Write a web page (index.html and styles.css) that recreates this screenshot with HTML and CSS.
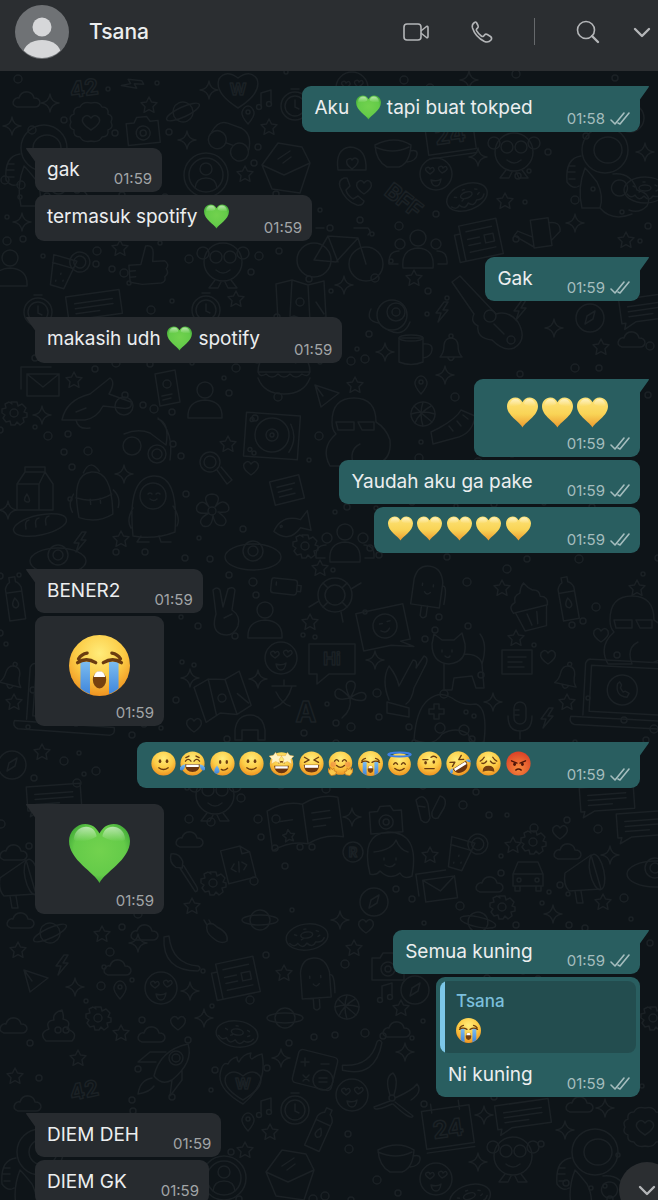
FILE: index.html
```html
<!DOCTYPE html>
<html lang="id">
<head>
    <meta charset="UTF-8">
    <meta name="viewport" content="width=device-width, initial-scale=1">
    <title>Tsana</title>
    <link rel="stylesheet" href="styles.css">
</head>
<body>
<svg class="sprite" aria-hidden="true">
    <defs>
        <radialGradient id="g-face" cx=".5" cy=".3" r=".72">
            <stop offset="0" stop-color="#ffec7a"></stop>
            <stop offset=".55" stop-color="#fccb45"></stop>
            <stop offset="1" stop-color="#ee8f1e"></stop>
        </radialGradient>
        <radialGradient id="g-angry" cx=".5" cy=".7" r=".75">
            <stop offset="0" stop-color="#f68a3c"></stop>
            <stop offset="1" stop-color="#d93a25"></stop>
        </radialGradient>
        <linearGradient id="g-yellow" x2="0" y2="1">
            <stop offset="0" stop-color="#fde37a"></stop>
            <stop offset=".55" stop-color="#f9d456"></stop>
            <stop offset="1" stop-color="#ec9a2f"></stop>
        </linearGradient>
        <radialGradient id="g-green" cx=".5" cy=".45" r=".6">
            <stop offset="0" stop-color="#72d24e"></stop>
            <stop offset=".7" stop-color="#64cb49"></stop>
            <stop offset="1" stop-color="#3ba334"></stop>
        </radialGradient>
        <linearGradient id="g-shine" x2="0" y2="1">
            <stop offset="0" stop-color="#fff" stop-opacity=".55"></stop>
            <stop offset="1" stop-color="#fff" stop-opacity="0"></stop>
        </linearGradient>
        <linearGradient id="g-tear" x2="0" y2="1">
            <stop offset="0" stop-color="#7cbcf0"></stop>
            <stop offset="1" stop-color="#3f86dc"></stop>
        </linearGradient>
    </defs>
    <symbol id="heart" viewBox="0 0 64 64">
        <path d="M32 63C27 52 0 39 0 19C0 9 8 1 17 1C24 1 29 5 32 11C35 5 40 1 47 1C56 1 64 9 64 19C64 39 37 52 32 63Z"></path>
        <path fill="url(#g-shine)" d="M5 17C6 8 12 4 18 4C24 4 28 8 29 14C25 18 7 22 5 17ZM59 17C58 8 52 4 46 4C40 4 36 8 35 14C39 18 57 22 59 17Z"></path>
    </symbol>
    <symbol id="smile" viewBox="0 0 64 64">
        <circle cx="32" cy="32" r="31" fill="url(#g-face)"></circle>
        <g fill="#6b3c10"><ellipse cx="23" cy="26" rx="3.4" ry="5"></ellipse><ellipse cx="41" cy="26" rx="3.4" ry="5"></ellipse></g>
        <path d="M20 43q12 9 24 0" class="ink"></path>
    </symbol>
    <symbol id="joy" viewBox="0 0 64 64">
        <circle cx="32" cy="32" r="31" fill="url(#g-face)"></circle>
        <path d="M14 26q7-9 14 0M36 26q7-9 14 0M15 17l8-4M49 17l-8-4" class="ink"></path>
        <path fill="#6b3510" d="M13 34h38q-1 20-19 20t-19-20z"></path>
        <path fill="#fff" d="M16 35h32v6h-32z"></path>
        <path fill="url(#g-tear)" d="M14 34q-2 16-10 16q-7-1-4-8q4-7 14-8zM50 34q2 16 10 16q7-1 4-8q-4-7-14-8z"></path>
    </symbol>
    <symbol id="tear" viewBox="0 0 64 64">
        <circle cx="32" cy="32" r="31" fill="url(#g-face)"></circle>
        <g fill="#6b3c10"><ellipse cx="26" cy="28" rx="3.2" ry="5"></ellipse><ellipse cx="43" cy="28" rx="3.2" ry="5"></ellipse></g>
        <path d="M29 47q8 5 16-3" class="ink"></path>
        <path fill="url(#g-tear)" d="M18 37q8 11 6 17q-5 7-12 2q-4-7 6-19z"></path>
    </symbol>
    <symbol id="stars" viewBox="0 0 64 64">
        <circle cx="32" cy="33" r="30" fill="url(#g-face)"></circle>
        <path d="M25 30q7-5 14 0" class="ink"></path>
        <path fill="#6b3510" d="M13 38h38q-2 19-19 19t-19-19z"></path>
        <path fill="#fff" d="M16 39h32v6h-32z"></path>
        <path fill="#fff3c4" stroke="#e2a33c" d="M17 3l5 9 11 0-7 9 3 11-12-5-11 6 2-12-8-8 11-2zM47 3l-5 9-11 0 7 9-3 11 12-5 11 6-2-12 8-8-11-2z"></path>
    </symbol>
    <symbol id="laugh" viewBox="0 0 64 64">
        <circle cx="32" cy="32" r="31" fill="url(#g-face)"></circle>
        <path d="M14 16l12 7-12 6M50 16l-12 7 12 6" class="ink"></path>
        <path fill="#6b3510" d="M12 35h40q-1 20-20 20t-20-20z"></path>
        <path fill="#fff" d="M15 36h34v7h-34z"></path>
    </symbol>
    <symbol id="hug" viewBox="0 0 64 64">
        <circle cx="32" cy="31" r="30" fill="url(#g-face)"></circle>
        <g fill="#ee7a45" opacity=".5"><circle cx="14" cy="34" r="7"></circle><circle cx="50" cy="34" r="7"></circle></g>
        <path d="M17 26q5-8 10 0M37 26q5-8 10 0M22 37q10 10 20 0" class="ink"></path>
        <path fill="#fbc74a" stroke="#c97a1e" stroke-width="2" d="M0 44l5 5 1-8 5 7 4-5 1 8 6 2-3 8-11 2q-8-6-8-19zM64 44l-5 5-1-8-5 7-4-5-1 8-6 2 3 8 11 2q8-6 8-19z"></path>
    </symbol>
    <symbol id="sob" viewBox="0 0 64 64">
        <circle cx="32" cy="32" r="32" fill="url(#g-face)"></circle>
        <path fill="url(#g-tear)" d="M12 28h10v34q-5-2-10-6zM42 28h10v28q-5 4-10 6z"></path>
        <path d="M9 29q9-6 19 0M36 29q10-6 19 0M10 25q3-5 9-6M54 25q-3-5-9-6" class="ink"></path>
        <ellipse cx="32" cy="47" rx="7" ry="9" fill="#77410f"></ellipse>
        <path fill="#fff" d="M26 44q1-6 6-6t6 6z"></path>
    </symbol>
    <symbol id="halo" viewBox="0 0 64 64">
        <circle cx="32" cy="34" r="29" fill="url(#g-face)"></circle>
        <path d="M17 34q5-8 10 0M37 34q5-8 10 0M20 45q12 10 24 0" class="ink"></path>
        <ellipse cx="32" cy="9" rx="29" ry="5" fill="none" stroke="#3f7fe4" stroke-width="5"></ellipse>
    </symbol>
    <symbol id="brow" viewBox="0 0 64 64">
        <circle cx="32" cy="32" r="31" fill="url(#g-face)"></circle>
        <g fill="#6b3c10"><ellipse cx="22" cy="30" rx="3.4" ry="4.4"></ellipse><ellipse cx="43" cy="28" rx="3.4" ry="4.4"></ellipse></g>
        <path d="M15 22h13M36 16q8-6 14 1M20 45h24" class="ink"></path>
    </symbol>
    <symbol id="rofl" viewBox="0 0 64 64">
        <g transform="rotate(-32 32 32)">
            <circle cx="32" cy="32" r="31" fill="url(#g-face)"></circle>
            <path d="M15 18l11 6-11 6M49 18l-11 6 11 6" class="ink"></path>
            <path fill="#6b3510" d="M12 36h40q-1 20-20 20t-20-20z"></path>
            <path fill="#fff" d="M15 37h34v7h-34z"></path>
            <path fill="url(#g-tear)" d="M12 34q-3 12-9 11q-5-9 9-11zM52 34q3 12 9 11q5-9-9-11z"></path>
        </g>
    </symbol>
    <symbol id="weary" viewBox="0 0 64 64">
        <circle cx="32" cy="32" r="31" fill="url(#g-face)"></circle>
        <path d="M11 26q5-2 10-10M53 26q-5-2-10-10M15 31q7 3 12-5M49 31q-7 3-12-5" class="ink"></path>
        <path fill="#77410f" d="M17 53q0-15 15-15t15 15q-15-5-30 0z"></path>
    </symbol>
    <symbol id="angry" viewBox="0 0 64 64">
        <circle cx="32" cy="32" r="31" fill="url(#g-angry)"></circle>
        <g fill="#4e1408"><ellipse cx="22" cy="34" rx="3.6" ry="4.4"></ellipse><ellipse cx="42" cy="34" rx="3.6" ry="4.4"></ellipse></g>
        <path d="M14 25l14 6M50 25l-14 6M25 49q7-6 14 0" class="ink dark"></path>
    </symbol>
    <symbol id="ticks" viewBox="0 0 20 14">
        <path d="M1 8l4 4L14 1M8 11l2 1L19 1"></path>
    </symbol>
</svg>

<header class="topbar">
    <svg class="avatar" viewBox="0 0 54 54" role="img" aria-label="Foto profil">
        <clipPath id="round"><circle cx="27" cy="27" r="26"></circle></clipPath>
        <circle cx="27" cy="27" r="27" fill="#6f7275"></circle>
        <g fill="#d6d7d9" clip-path="url(#round)">
            <circle cx="27" cy="22" r="9.5"></circle>
            <ellipse cx="27" cy="49" rx="19" ry="14"></ellipse>
        </g>
    </svg>
    <h1 class="name">Tsana</h1>
    <div class="calls">
        <button class="action" aria-label="Panggilan video">
            <svg class="icon" viewBox="0 0 32 32">
                <rect x="4" y="8" width="17" height="16" rx="3"></rect>
                <path d="M21.500 14.500l5-4q1.500-.8 1.500 1v9q0 1.800-1.500 1l-5-4"></path>
            </svg>
        </button>
        <button class="action" aria-label="Panggilan suara">
            <svg class="icon" viewBox="0 0 32 32">
                <path d="M8.500 6.500q-3 2-2 5.500q3 9 12 13.500q4 1.500 6.500-1.500q1.500-2-.5-3.500l-3.200-2q-1.600-1-2.800.5l-1 1.300q-1 .6-2.200-.3q-3-2.200-4.800-5.300q-.5-1 .2-1.800l1-1q1-1 .3-2.400l-1.600-3q-.8-1-1.900 0z"></path>
            </svg>
        </button>
    </div>
    <span class="divider"></span>
    <div class="tools">
        <button class="action" aria-label="Cari">
            <svg class="icon" viewBox="0 0 32 32">
                <circle cx="14" cy="14" r="8.500"></circle>
                <path d="M20 20l6 6" class="thick"></path>
            </svg>
        </button>
        <button class="action" aria-label="Menu">
            <svg class="icon" viewBox="0 0 32 32"><path d="M9 13l7 7 7-7" class="thick"></path></svg>
        </button>
    </div>
</header>

<main class="chat">
    <svg class="wallpaper" id="wallpaper" aria-hidden="true"></svg>

    <section class="group out">
        <div class="bubble">
            <p class="text">Aku <svg class="emoji green" role="img" aria-label="💚"><use href="#heart"></use></svg> tapi buat tokped</p>
            <div class="meta"><time>01:58</time><svg class="ticks"><use href="#ticks"></use></svg></div>
        </div>
    </section>

    <section class="group in">
        <div class="bubble">
            <p class="text">gak</p>
            <div class="meta"><time>01:59</time></div>
        </div>
        <div class="bubble">
            <p class="text">termasuk spotify <svg class="emoji green" role="img" aria-label="💚"><use href="#heart"></use></svg></p>
            <div class="meta"><time>01:59</time></div>
        </div>
    </section>

    <section class="group out">
        <div class="bubble">
            <p class="text">Gak</p>
            <div class="meta"><time>01:59</time><svg class="ticks"><use href="#ticks"></use></svg></div>
        </div>
    </section>

    <section class="group in">
        <div class="bubble">
            <p class="text">makasih udh <svg class="emoji green" role="img" aria-label="💚"><use href="#heart"></use></svg> spotify</p>
            <div class="meta"><time>01:59</time></div>
        </div>
    </section>

    <section class="group out">
        <div class="bubble sticker">
            <div class="big three">
                <svg class="yellow" role="img" aria-label="💛"><use href="#heart"></use></svg>
                <svg class="yellow" role="img" aria-label="💛"><use href="#heart"></use></svg>
                <svg class="yellow" role="img" aria-label="💛"><use href="#heart"></use></svg>
            </div>
            <div class="meta"><time>01:59</time><svg class="ticks"><use href="#ticks"></use></svg></div>
        </div>
        <div class="bubble">
            <p class="text">Yaudah aku ga pake</p>
            <div class="meta"><time>01:59</time><svg class="ticks"><use href="#ticks"></use></svg></div>
        </div>
        <div class="bubble">
            <div class="run five">
                <svg class="emoji yellow" role="img" aria-label="💛"><use href="#heart"></use></svg>
                <svg class="emoji yellow" role="img" aria-label="💛"><use href="#heart"></use></svg>
                <svg class="emoji yellow" role="img" aria-label="💛"><use href="#heart"></use></svg>
                <svg class="emoji yellow" role="img" aria-label="💛"><use href="#heart"></use></svg>
                <svg class="emoji yellow" role="img" aria-label="💛"><use href="#heart"></use></svg>
            </div>
            <div class="meta"><time>01:59</time><svg class="ticks"><use href="#ticks"></use></svg></div>
        </div>
    </section>

    <section class="group in">
        <div class="bubble">
            <p class="text">BENER2</p>
            <div class="meta"><time>01:59</time></div>
        </div>
        <div class="bubble sticker">
            <div class="big"><svg role="img" aria-label="😭"><use href="#sob"></use></svg></div>
            <div class="meta"><time>01:59</time></div>
        </div>
    </section>

    <section class="group out">
        <div class="bubble">
            <div class="run all">
                <svg class="emoji" role="img" aria-label="🙂"><use href="#smile"></use></svg>
                <svg class="emoji" role="img" aria-label="😂"><use href="#joy"></use></svg>
                <svg class="emoji" role="img" aria-label="🥲"><use href="#tear"></use></svg>
                <svg class="emoji" role="img" aria-label="🙂"><use href="#smile"></use></svg>
                <svg class="emoji" role="img" aria-label="🤩"><use href="#stars"></use></svg>
                <svg class="emoji" role="img" aria-label="😆"><use href="#laugh"></use></svg>
                <svg class="emoji" role="img" aria-label="🤗"><use href="#hug"></use></svg>
                <svg class="emoji" role="img" aria-label="😭"><use href="#sob"></use></svg>
                <svg class="emoji" role="img" aria-label="😇"><use href="#halo"></use></svg>
                <svg class="emoji" role="img" aria-label="🤨"><use href="#brow"></use></svg>
                <svg class="emoji" role="img" aria-label="🤣"><use href="#rofl"></use></svg>
                <svg class="emoji" role="img" aria-label="😩"><use href="#weary"></use></svg>
                <svg class="emoji" role="img" aria-label="😡"><use href="#angry"></use></svg>
            </div>
            <div class="meta"><time>01:59</time><svg class="ticks"><use href="#ticks"></use></svg></div>
        </div>
    </section>

    <section class="group in">
        <div class="bubble sticker">
            <div class="big"><svg class="green" role="img" aria-label="💚"><use href="#heart"></use></svg></div>
            <div class="meta"><time>01:59</time></div>
        </div>
    </section>

    <section class="group out">
        <div class="bubble">
            <p class="text">Semua kuning</p>
            <div class="meta"><time>01:59</time><svg class="ticks"><use href="#ticks"></use></svg></div>
        </div>
        <div class="bubble reply">
            <blockquote class="quote">
                <p class="author">Tsana</p>
                <svg class="emoji" role="img" aria-label="😭"><use href="#sob"></use></svg>
            </blockquote>
            <p class="text">Ni kuning</p>
            <div class="meta"><time>01:59</time><svg class="ticks"><use href="#ticks"></use></svg></div>
        </div>
    </section>

    <section class="group in">
        <div class="bubble">
            <p class="text">DIEM DEH</p>
            <div class="meta"><time>01:59</time></div>
        </div>
        <div class="bubble">
            <p class="text">DIEM GK</p>
            <div class="meta"><time>01:59</time></div>
        </div>
    </section>

    <button class="jump" aria-label="Ke pesan terbaru">
        <svg class="icon" viewBox="0 0 32 32"><path d="M9 13l7 7 7-7" class="thick"></path></svg>
    </button>
</main>
<script src="wallpaper.js"></script>
</body>
</html>
```
FILE: styles.css
```css
*{
    box-sizing: border-box;
}
body{
    margin: 0;
    height: 100vh;
    overflow: hidden;
    display: flex;
    flex-direction: column;
    background-color: #0e1418;
    color: #eceeef;
    font-family: Inter, Roboto, "Liberation Sans", sans-serif;
}
p, h1, blockquote{
    margin: 0;
}
button{
    all: unset;
    cursor: pointer;
}
.sprite{
    position: absolute;
    width: 0;
    height: 0;
}
.ink{
    fill: none;
    stroke: #6b3c10;
    stroke-width: 3.5;
    stroke-linecap: round;
    stroke-linejoin: round;
}
.dark{
    stroke: #4e1408;
}

/* header */
.topbar{
    flex: none;
    display: flex;
    align-items: center;
    height: 71px;
    padding: 0 0 8px 15px;
    background-color: #2b2e31;
}
.avatar{
    width: 54px;
    height: 54px;
}
.name{
    flex: 1;
    margin-left: 20px;
    font-size: 21px;
    font-weight: 500;
    line-height: 28px;
}
.calls{
    display: flex;
    gap: 34px;
}
.tools{
    display: flex;
    gap: 22px;
}
.divider{
    width: 1px;
    height: 27px;
    margin: 0 37px 0 36px;
    background-color: #66696c;
}
.action{
    width: 32px;
    height: 32px;
}
.icon{
    display: block;
    width: 32px;
    height: 32px;
    fill: none;
    stroke: #b4b6b8;
    stroke-width: 1.6;
    stroke-linecap: round;
    stroke-linejoin: round;
}
.thick{
    stroke-width: 2.4;
}

/* conversation */
.chat{
    position: relative;
    flex: 1;
    min-height: 0;
    overflow: hidden;
    display: flex;
    flex-direction: column;
    gap: 16px;
    padding: 15px 18px 0 35px;
}
.wallpaper{
    position: absolute;
    top: 0;
    left: 0;
    width: 100%;
    height: 100%;
    fill: none;
    stroke: #1b2125;
    stroke-width: 1.5;
    stroke-linecap: round;
    stroke-linejoin: round;
    font-family: Inter, sans-serif;
    font-weight: 700;
}
.group{
    flex: none;
    position: relative;
    display: flex;
    flex-direction: column;
    gap: 3px;
    align-items: flex-start;
}
.out{
    align-items: flex-end;
}
.bubble{
    position: relative;
    display: flex;
    align-items: flex-end;
    gap: 34px;
    padding: 9px 10px 4px 12px;
    border-radius: 9px;
    background-color: #272b2f;
}
.out .bubble{
    background-color: #295e60;
}
/* the first bubble of a group carries the tail */
.in .bubble:first-child{
    border-top-left-radius: 0;
}
.out .bubble:first-child{
    border-top-right-radius: 0;
}
.bubble:first-child::before{
    content: "";
    position: absolute;
    top: 0;
    left: -9px;
    width: 10px;
    height: 15px;
    background-color: inherit;
    clip-path: polygon(0 0, 100% 0, 100% 100%, 80% 80%, 5% 10%);
}
.out .bubble:first-child::before{
    left: auto;
    right: -9px;
    clip-path: polygon(0 0, 100% 0, 95% 10%, 20% 80%, 0 100%);
}
.text{
    margin-bottom: 5px;
    font-size: 19px;
    line-height: 26px;
}
.text:has(.emoji){
    margin-bottom: 7px;
}
.emoji{
    width: 25px;
    height: 25px;
}
.text .emoji{
    display: inline-block;
    margin: 0 1px;
    vertical-align: -6px;
}
.green{
    fill: url(#g-green);
}
.yellow{
    fill: url(#g-yellow);
}
.meta{
    flex: none;
    display: flex;
    align-items: center;
    gap: 5px;
    font-size: 15px;
    line-height: 18px;
    color: #a2a5a7;
}
.out .meta{
    color: #a5bdbe;
}
.ticks{
    width: 20px;
    height: 14px;
    fill: none;
    stroke: #a5bdbe;
    stroke-width: 1.6;
    stroke-linecap: round;
    stroke-linejoin: round;
}
.run{
    display: flex;
    justify-content: space-between;
    margin: 0 2px 8px;
}
.five{
    width: 143px;
}
.all{
    width: 380px;
}
.sticker{
    flex-direction: column;
    gap: 8px;
    padding-top: 19px;
}
.big{
    display: flex;
    gap: 4px;
    padding: 0 24px 0 22px;
}
.big svg{
    width: 61px;
    height: 61px;
}
.big.three{
    margin: -1px 0;
    padding: 0 22px 0 21px;
}
.three svg{
    width: 31px;
    height: 31px;
}
.reply{
    display: grid;
    grid-template-columns: max-content max-content;
    column-gap: 34px;
    row-gap: 9px;
    padding-top: 4px;
}
.quote{
    grid-column: 1 / 3;
    height: 72px;
    margin: 0 -6px 0 -8px;
    padding: 10px 16px;
    border-radius: 8px;
    background-image: linear-gradient(to right, #7cc7e8 5px, #234d4f 5px);
}
.author{
    font-size: 17px;
    font-weight: 500;
    line-height: 20px;
    color: #7bbfdc;
}
.quote .emoji{
    display: block;
    margin-top: 7px;
}
.jump{
    position: absolute;
    right: -17px;
    bottom: -18px;
    width: 56px;
    height: 56px;
    display: flex;
    align-items: center;
    justify-content: center;
    border-radius: 50%;
    background-color: #2b2e31;
}
```
FILE: wallpaper.js
```js
const wallpaper = document.querySelector('#wallpaper')
const TOP = 71

// every doodle is drawn around its own 0,0
const doodles = {
    star: '<path d="M0-8l2.500 5 5.500.8-4 4 1 5.600-5-2.700-5 2.700 1-5.600-4-4 5.500-.8z"/>',
    sparkle: '<path d="M0-9q1 8 9 9q-8 1-9 9q-1-8-9-9q8-1 9-9z"/>',
    heart: '<path d="M0 7q-9-6-7-11q4-5 7 0q4-5 7 0q2 5-7 11z"/>',
    cloud: '<path d="M-10 7q-6-2-3-7q2-3 5-2q2-7 9-6q5 1 6 6q6 0 6 5q-1 4-5 4z"/>',
    pin: '<path d="M0 9q-7-8-6-12q2-6 6-6t6 6q1 4-6 12z"/><circle cy="-3" r="2"/>',
    note: '<path d="M-4 6v-13l10-3v13"/><circle cx="-6" cy="7" r="2.500"/><circle cx="4" cy="4" r="2.500"/>',
    bolt: '<path d="M2-10l-8 11h5l-3 9 10-12h-5l5-8z"/>',
    planet: '<circle r="10"/><ellipse rx="18" ry="5"/>',
    donut: '<ellipse rx="21" ry="13"/><ellipse cy="-2" rx="6" ry="3"/><path d="M-18 4q4 5 8 1q4 7 9 1q5 6 9 0q6 2 9-3M-12-4l2 1M-6 2l2-1M10-5l2 1M11 1l2-1M-2-8l2 0"/>',
    smiley: '<circle r="16"/><path d="M-6 0q-6-4-4-6q3-2 4 1q3-3 4 0q1 2-4 5zM6-1q-5-4-3-6q3-2 4 1q3-3 4 0q1 2-5 5zM-5 6q6 2 10-1q-1 7-5 7t-5-6z"/>',
    camera: '<path d="M-16-9h8l3-5h10l3 5h8v22h-32z"/><circle cy="2" r="7"/><circle cy="2" r="3"/>',
    badge: '<path d="M-20 0q-3-6 3-8q-1-7 6-7q3-6 11-4q8-2 11 4q7 0 6 7q6 2 3 8q3 6-3 8q1 7-6 7q-3 6-11 4q-8 2-11-4q-7 0-6-7q-6-2-3-8z"/><path d="M0 8q-11-7-8-12q4-5 8 0q4-5 8 0q3 5-8 12z"/>',
    wheart: '<path d="M0 18q-24-15-19-29q7-10 19-1q12-9 19 1q5 14-19 29z"/><text y="5" font-size="16" text-anchor="middle">W</text>',
    flame: '<path d="M0 24q-28-16-22-34q2-8 7-6q2-5 9-7q0 4 2 5q4-8 12-9q-2 5 1 6q5-4 10-5q6 30-19 50z"/><path d="M0 20q-22-13-17-24q7-8 17 0q10-8 17 0q5 11-17 24z"/><text y="9" font-size="15" text-anchor="middle">W</text>',
    n42: '<text y="8" font-size="22" text-anchor="middle">42</text>',
    bff: '<text y="8" font-size="22" text-anchor="middle">BFF</text>',
    calendar: '<path d="M-24-20h48v38h-48zM-24 22h48M-14-26v9M14-26v9"/><text y="9" font-size="24" text-anchor="middle">24</text>',
    person: '<circle cy="-12" r="8"/><path d="M-17 16q-1-17 17-18q18 1 17 18z"/>',
    avatar: '<circle r="22"/><circle r="17"/><circle cy="-6" r="6"/><path d="M-11 13q1-10 11-10t11 10"/>',
    people: '<circle cy="-14" r="8"/><circle cx="-18" cy="-8" r="5"/><circle cx="18" cy="-8" r="5"/><path d="M-15 16q-2-19 15-20q17 1 15 20zM-20 12h-9q-1-13 10-13M20 12h9q1-13-10-13"/>',
    glasses: '<circle cx="-12" cy="4" r="9"/><circle cx="13" cy="8" r="9"/><path d="M-3 4h7M-20-1q2-14 12-14h15q12 2 14 18"/>',
    envelope: '<path d="M-16-10h32v22h-32zM-16-10l16 13 16-13M-22 5v-22h30"/>',
    letter: '<path d="M-24 0l16-22 24 4 8 16-10 30-28-4zM-24 0l22 10 26-12M-8-6l12-8M-3-2l8-6"/>',
    astronaut: '<circle cy="-12" r="23"/><ellipse cx="3" cy="-12" rx="14" ry="13"/><path d="M-24-6q-16 2-14 26q6 8 12 4M-36 4h6M-37 10h7M-36 17h6M-20 6q-8 20-3 40h18q4-12-3-26q-8-10-12-14M8 12q18-2 24 16q16 4 10 16q-8 8-18 4M14 18a8 8 0 1 0 1 0M-5 46q12 14 32 6"/>',
    clock: '<circle r="14"/><circle r="10"/><path d="M0-6v7l4 2M-4-17h8"/>',
    compass: '<circle r="14"/><path d="M-5 6l2-8 8-5-2 8z"/>',
    cup: '<path d="M-18-10q20-10 36 0q-1 18-12 22h-12q-11-6-12-22zM-18-8q18 8 34 0M17-4q8-2 7 4t-10 7"/>',
    dome: '<path d="M-14 10q-3-21 12-23q17 1 16 23zM0 9q-7-5-5-9q4-3 5 0q3-4 6 0q1 4-6 9z"/>',
    monkey: '<circle r="19"/><circle cx="-20" cy="-9" r="6"/><circle cx="20" cy="-9" r="6"/><circle cx="-7" cy="-5" r="6"/><circle cx="7" cy="-5" r="6"/><path d="M-7 8q7 6 14 0M-8 18l-6 8h9l3-6M8 18l6 8h-9l-3-6"/>',
    phone: '<path d="M-8-14q-6 2-4 9q5 14 17 18q6 1 7-4l-6-5-5 3q-6-4-7-9l4-4-3-8z"/>',
    paper: '<path d="M-18-18h38v36h-38zM-18-10h-6v28h6M-12-11h26M-12-3h12M-12 3h12M-12 10h26M5-4h9v8h-9z"/>',
    can: '<path d="M-8-13h18v28h-18zM-8 4l-14-8-4 4 18 14M10-8q12 0 10 10l-10 8"/>',
    bike: '<circle cx="-26" cy="6" r="17"/><circle cx="26" cy="10" r="17"/><path d="M-26 6l14-24 30 2-22 24zM-16-26h-8M18-16l8 26M14-26h14q4 4 0 7M-12-18l10 26"/>',
    drink: '<path d="M-14-12h24l-5 30h-14zM-13-4h22M-2 4v1M2 10v1M-5 12v1"/><circle cx="13" cy="-12" r="10"/><circle cx="13" cy="-12" r="6"/>',
    thumb: '<path d="M-18-2h12l6-18q8-1 7 8l-1 8h12q5 4 1 8q3 5-2 8q1 5-4 6h-19l-12-3zM-12 4h-6M-12 10h-6"/>',
    map: '<path d="M-24-18l16-4 16 5 16-4 2 36-16 5-16-6-16 5zM-8-22l-2 36M8-17l2 37M16 0l8 12"/><circle r="4"/>',
    speech: '<path d="M-28-12h54v24h-40l-12 6 2-6h-4zM-20-4h38M-20 1h38M-20 6h24"/>',
    comment: '<path d="M-15-12h30v24h-30zM-9-5h18M-9 0h14M-9 5h16"/>',
    gear: '<path d="M-3-11h6l1 4 4-2 4 4-2 4 3 1v4l-4 1 1 4-4 3-3-3-2 3h-4l-1-4-4 1-3-4 2-3-3-2v-4l4-1-1-4 4-2 3 2z"/><circle r="4"/>',
    rocket: '<path d="M-14 12q6-26 34-32q6 18-16 36q-10 6-18-4zM-12-2h-18l12-10h16M4 16l-2 16 12-16v-10M-16 14q-12 2-14 16q12-2 16-8"/><circle cx="8" cy="-6" r="7"/><circle cx="8" cy="-6" r="4"/>',
    plane: '<path d="M-34 16q4-20 28-26l20-16q6 4-1 16l22 8q2 8-10 6l-18-2q-6 12-18 14zM-20 8l10-4"/><circle cx="28" cy="2" r="9"/><path d="M-20 16q2 10 14 8"/>',
    passport: '<path d="M-12-14l20-4 5 32-20 4zM-5 8l10-2M-4 12l8-2"/><circle cy="-4" r="4"/>',
    burger: '<path d="M-26 0q0-20 26-20t26 20zM-26 0q2 6 8 2q6 6 12 0q6 6 12 0q6 6 12 0q6 4 8-2M-26 6q6 16 26 16t26-16M-8-12l2 1M2-14l2 1M10-10l2 1"/>',
    dart: '<path d="M-12-10l24 8-18 14zM-12-10l8 11"/>',
    turntable: '<path d="M-27-21h54v44h-54zM18-12q8 14 0 28"/><circle r="17"/><circle r="6"/><circle r="2"/><circle cx="-21" cy="-14" r="2"/><circle cx="-21" cy="16" r="2"/>',
    scooter: '<circle cx="-16" cy="6" r="9"/><circle cx="9" cy="14" r="9"/><circle cx="9" cy="14" r="5"/><path d="M-24-6q14-6 26-1l16 12q4-22-8-26M22 20q4-28-12-42"/>',
    lens: '<circle r="10"/><circle r="6"/><path d="M7 8l10 14 5-4-11-13"/>',
    bag: '<path d="M-17 28q-4-44 17-44t17 44q-17 8-34 0zM-18 8q18 8 36 0M-8-16q8-14 16 0M-20 4q-7 8-3 18M20 4q7 8 3 18M-4 11v5M6 11v5"/>',
    milk: '<path d="M-18-6l8-12h20l8 12v26h-36zM-10-18v-5h20v5M-18-6h22l6-12M4-6v26"/><path d="M-8 4q-5 7 0 8t0-8z"/>',
    penguin: '<path d="M-20 30q-6-58 20-60t22 56q-20 8-42 4zM-20 2q-7 12-2 20M20 0q8 12 4 20M-12 30l-4 6h12M6 30l2 6h10"/><circle cy="-10" r="13"/><path d="M-5-12q2-2 4 0M3-12q2-2 4 0M-3-7q4 3 7 0"/>',
    flower: '<circle r="4"/><path d="M-3-4q-8-12 3-13q11 1 3 13q8-9 13-2q4 9-10 7q12 8 6 13q-9 3-11-10q-1 14-10 11q-7-6 6-13q-15 2-12-7q5-8 12 1z"/>',
    fish: '<path d="M-18 5q10-16 28-8l8-8 1 20-10-4q-14 14-27 0z"/><circle cx="-10" cy="1" r="1"/>',
    bread: '<ellipse rx="27" ry="10" transform="rotate(-12)"/><path d="M-14 4q-2-8 3-9M-4 2q-2-8 3-9M6 0q-2-8 3-9"/>',
    hat: '<ellipse cy="6" rx="28" ry="13"/><circle r="10"/><circle r="5"/>',
    guitar: '<path d="M-34-30l8-6 36 38q12-4 22 8q10 18-4 26q-10 4-22-8q-16-2-14-14q-8-4-4-12zM8 12l10 10"/><circle cx="4" cy="4" r="6"/>',
    ball: '<circle r="12"/><path d="M-12 0q12-4 24 0M0-12q-4 12 0 24M-9-8q8 8 18 16M-8 9q4-10 16-17"/>',
    bell: '<path d="M-11 8q4-4 4-12q1-7 7-7t7 7q0 8 4 12zM-3 9q3 5 6 0"/><circle cy="-13" r="2"/>',
    mug: '<path d="M-13-12h24v24q-12 5-24 0zM11-6q10-1 9 6t-9 8"/><ellipse cx="-1" cy="-12" rx="12" ry="3"/>',
    rose: '<circle r="15"/><circle cx="4" cy="-3" r="9"/><circle cx="4" cy="-3" r="4"/><path d="M-13 8q-14-2-8-14M-4 15q16 8 22-8"/>',
    shoe: '<path d="M-24 4l8-4q18-10 22-18l14 6q-2 18-20 22l-22 6zM-6-2l4 5M2-7l4 5M8-13l5 4"/>',
    dino: '<path d="M-30-10q0-24 22-24t22 24q10 6 14 18q2 20-14 24M-30-10q0 8 4 12q-16 14-6 32h24q-6-16 6-22M-26-10h18v8h-16zM-4-10h16v8h-12z"/>',
    battery: '<rect x="-14" y="-8" width="26" height="15" rx="3"/><path d="M12-3h4v6h-4M-9-4v3"/>',
    ring: '<circle r="17"/><circle r="10"/><path d="M-12-12l5 5M12-12l-5 5M-12 12l5-5M12 12l-5-5M16-6l10-6M-16 6l-10 6M6 17l2 10"/>',
    peace: '<path d="M-12 4l-3-24q4-4 7 0l3 17 5-18q5-3 7 1l-3 20q9 6 6 16q-5 12-17 8q-10-4-5-20zM-4 8l8-4"/>',
    hi: '<path d="M-23-18h46v30h-26l-12 10v-10h-8z"/><text y="3" font-size="17" text-anchor="middle">Hi</text>',
    winkbox: '<path d="M-26-18h48v36h-10l12 8-22-6h-28z"/><circle r="12"/><path d="M-5-3h3M3-4h3M-5 4q5 4 9-1"/>',
    pop: '<path d="M-14 18v-26q2-14 14-14t15 15v25zM-3 18v10q3 4 6 0v-10M15-4q5-2 4 18M-5-4v2M6-4v2M-2 4q3 4 6 0"/>',
    cupcake: '<path d="M-16 4l5 20h22l5-20zM-18 4q-4-8 4-10q0-7 7-8q2-6 6-9q3 6 7 9q7 1 6 8q8 2 5 10zM-5 8l2 12M5 8l-2 12"/>',
    bottle: '<path d="M-8 20v-32q2-5 5-6v-5h6v5q3 1 5 6v32zM-8-8h16M0-2q-6 8 0 10q6-2 0-10z"/>',
    cat: '<path d="M-20-14l2-10 8 6h12l8-7 3 11q2 18-16 20q-17-1-17-20zM12-4q16 0 18 10q6-20-2-30M30 6l2 24h-8l-4-12-18 2-2 12h-8v-26M-10-8v2M0-8v2M-7-2q3 3 5 0"/>',
    hand: '<path d="M-16 14q-8-20 0-34q8 10 10 20l14-26q5 0 3 8l8-12q6 2 0 12l-10 20q-2 12-8 16M-18 16l22 6v9l-22-4z"/>',
    clover: '<path d="M0 2q-16 4-15-6q3-8 15 6q-8-16 1-17q9 1-1 17q14-10 16-2q0 8-16 2zM0 2q2 12-8 20"/>',
    translate: '<path d="M-24-20h24M-12-26v6M-4-20q-4 16-18 22M-20-14q6 12 14 14"/><text x="10" y="16" font-size="28" text-anchor="middle">A</text>',
    pad: '<path d="M-34 22q2-30 14-40q12-10 24-2q10 8 24 6q12 4 8 38q-12 4-16-8q-12-8-26 0q-8 14-28 6z"/><path d="M-14-14h5v5h5v5h-5v5h-5v-5h-5v-5h5z"/><circle cx="-8" cy="10" r="5"/><circle cx="16" cy="12" r="5"/><circle cx="18" cy="-6" r="2"/><circle cx="26" cy="-2" r="2"/>',
    phones: '<path d="M-15 12v-10q2-15 15-15t15 15v10h-7v-10h-16v10z"/>',
    mic: '<rect x="-6" y="-16" width="12" height="22" rx="6"/><path d="M-12-2q0 15 12 15t12-15M0 13v8M-6-8h5M-6-3h5"/>',
    laptop: '<path d="M-38 22v-52q2-5 6-4h70q5 0 5 5v51M-32 18v-46h70v46zM-50 24h100q2 7-4 8h-92q-6-2-4-8zM-10 24h22"/><circle r="15" cy="-5"/><path d="M-5-11q-2 12 10 13l2-4-4-2-2 1-3-4 1-3-2-3z"/>',
    book: '<path d="M-36-16q18-8 36-2q18-8 36-2v40q-18-6-36 2q-18-6-36 2zM0-18v40M-26-4h14M8-8h18M8-1h18M8 6h12"/><path d="M-18 5l2 4 4 1-3 3 1 4-4-2-4 2 1-4-3-3 4-1z"/>',
    flip: '<path d="M-12-12q8-8 12 4l2 14q-3 8-9 2zM-10-6l7 1M12-16q8 2 4 12l-6 10q-7 2-6-6z"/>',
    doc: '<path d="M-14-16h20l8 8v26h-28zM6-16v8h8M-4 0l-4 4 4 4M4 0l4 4-4 4M1-1l-2 10"/>',
    girl: '<path d="M-20 18q-10-40 18-42q32 0 24 44q-8 4-12-3q-10 8-20-2q-4 5-10 3zM-16-4q18-2 22-12q4 10 12 12M-6 2v2M6 2v2M-5 9q6 4 10-1"/>',
    rmark: '<circle r="10"/><text y="5" font-size="13" text-anchor="middle">R</text>',
    car: '<path d="M-15 12v-12l5-12h20l5 12v12zM-15 0h30M-13 12v5h5v-5M8 12v5h5v-5"/><circle cx="-9" cy="6" r="2"/><circle cx="9" cy="6" r="2"/>',
    horn: '<path d="M-20-2l26-18 10 34-32 2q-6-6-4-18zM-10 16l2 12h6l-2-12"/><ellipse cx="12" cy="-3" rx="7" ry="18" transform="rotate(-12 12 -3)"/>',
    brush: '<path d="M-8-20q8 0 10 10l-2 6-6-2q-6-6-2-14zM-2-4l10 26q4 0 2-6l-8-22"/>',
    banana: '<path d="M-16-20q-2 34 34 34q4-3 0-5q-26-2-29-30z"/>',
    peanut: '<path d="M-10-10q4-4 10 2q12 6 10 14q-6 4-14-3q-8-6-6-13zM-10-10l-3-5M-6-11l-2-4"/>',
    poop: '<path d="M-16 14q-8-8 3-12q-4-8 5-9q-2-7 8-10q2 6 1 9q9 2 4 10q12 4 5 12z"/><circle cx="-4" cy="3" r="3"/><circle cx="4" cy="3" r="3"/>',
    calc: '<rect x="-20" y="-17" width="40" height="34" rx="4" transform="rotate(14)"/><path d="M-10-12v8M-14-8h8M6-6h8M-12 5l6 6M-6 5l-6 6"/><circle cx="8" cy="10" r="10"/><path d="M4 8h8M4 12h8"/>',
    fan: '<circle r="3"/><path d="M-2-3q-6-18 3-22q6 6 1 22M3 0q18-8 22-14q6 8-6 16M-2 3l-16 6q0 5 18-3M3 4l18 14q-2 5-20-12"/>'
}

const spots = [
    ['cloud', 27, 100], ['n42', 84, 88, -8], ['bolt', 132, 84, 60], ['wheart', 238, 90], ['star', 149, 105], ['planet', 183, 112, -25],
    ['badge', 91, 122], ['camera', 143, 131, -6], ['sparkle', 50, 103], ['sparkle', 12, 126], ['sparkle', 187, 140], ['sparkle', 209, 90],
    ['glasses', 230, 140, 20], ['letter', 286, 165], ['avatar', 206, 175], ['star', 269, 127], ['star', 245, 174], ['pin', 248, 115],
    ['note', 265, 100], ['clock', 295, 106], ['astronaut', 44, 160], ['sparkle', 22, 222], ['cup', 393, 155], ['dome', 352, 160],
    ['smiley', 436, 174], ['smiley', 352, 88], ['monkey', 514, 152], ['phone', 352, 192], ['heart', 364, 187], ['bff', 404, 200, 38],
    ['donut', 467, 197, -20], ['star', 505, 201], ['star', 626, 240], ['star', 414, 278], ['paper', 480, 240, -12], ['can', 540, 232, -8],
    ['people', 418, 252], ['bike', 340, 254], ['sparkle', 575, 223], ['sparkle', 478, 157], ['sparkle', 645, 152], ['sparkle', 344, 285],
    ['sparkle', 469, 80], ['astronaut', 605, 162], ['donut', 645, 190], ['compass', 630, 118], ['calendar', 450, 134, -8],
    ['drink', 64, 270, 16], ['thumb', 147, 266, -4], ['monkey', 223, 262], ['map', 300, 302], ['speech', 95, 305, -8], ['clock', 38, 312],
    ['person', 10, 270], ['star', 120, 248], ['star', 236, 299], ['star', 74, 380], ['star', 228, 444], ['star', 121, 539],
    ['clock', 206, 310], ['envelope', 43, 384], ['gear', 14, 413], ['gear', 305, 546], ['sparkle', 42, 415], ['sparkle', 124, 474],
    ['plane', 96, 404], ['passport', 167, 388], ['person', 205, 402], ['burger', 284, 372], ['dart', 327, 395], ['turntable', 272, 435, 4],
    ['scooter', 148, 440], ['lens', 210, 462], ['heart', 251, 468], ['bag', 93, 488, -6], ['milk', 35, 490], ['penguin', 153, 506],
    ['flower', 212, 511], ['fish', 291, 524, -8], ['bread', 40, 525], ['comment', 287, 490, -14], ['bolt', 80, 542], ['people', 345, 546],
    ['hat', 253, 551], ['sparkle', 8, 510], ['guitar', 486, 312], ['ball', 423, 414], ['pin', 421, 385], ['bell', 451, 349],
    ['mug', 412, 350], ['rose', 392, 315], ['bolt', 442, 312], ['bolt', 520, 310], ['compass', 590, 318], ['cloud', 632, 340],
    ['star', 601, 347], ['star', 355, 385], ['sparkle', 385, 352], ['sparkle', 445, 375], ['sparkle', 554, 328], ['shoe', 455, 428],
    ['dino', 362, 432], ['speech', 648, 308, -8], ['battery', 285, 587, 6], ['ring', 335, 595], ['peace', 228, 610], ['person', 265, 622],
    ['smiley', 281, 658], ['hi', 332, 662], ['sparkle', 375, 660], ['sparkle', 258, 679], ['sparkle', 493, 702], ['sparkle', 352, 817],
    ['sparkle', 610, 855], ['sparkle', 190, 678], ['winkbox', 385, 626, -12], ['pop', 427, 588, 8], ['cupcake', 530, 605, -14],
    ['bottle', 568, 600, -10], ['star', 502, 588], ['star', 637, 588], ['star', 567, 702], ['star', 516, 638], ['star', 430, 855],
    ['star', 513, 845], ['star', 320, 568], ['star', 310, 622], ['comment', 517, 662], ['heart', 548, 657], ['heart', 601, 635],
    ['heart', 560, 832], ['heart', 194, 725], ['cat', 452, 658], ['hand', 405, 686], ['clover', 350, 696], ['translate', 296, 706],
    ['pad', 448, 718], ['map', 222, 698, -16], ['phones', 250, 728], ['mic', 520, 718], ['bolt', 547, 718], ['bell', 567, 677, 12],
    ['laptop', 622, 695, 3], ['dino', 640, 630], ['book', 305, 822, -8], ['camera', 386, 820, -4], ['flip', 428, 812], ['gear', 213, 883],
    ['gear', 533, 842], ['gear', 502, 907], ['doc', 238, 863, -14], ['girl', 390, 856], ['envelope', 440, 888, -8], ['car', 528, 874],
    ['horn', 585, 875], ['drink', 462, 852, 16], ['rmark', 353, 852], ['compass', 374, 902], ['cloud', 568, 852], ['cloud', 490, 885],
    ['speech', 608, 798, -4], ['speech', 645, 824, -4], ['hat', 655, 868], ['monkey', 215, 795], ['bottle', 15, 600, -8],
    ['compass', 12, 765], ['star', 42, 752], ['star', 14, 702], ['laptop', 66, 700, 4], ['cloud', 190, 840], ['cloud', 14, 853],
    ['brush', 183, 872, -12], ['bell', 12, 677, 14], ['speech', 55, 797, -4], ['horn', 20, 880], ['hat', 58, 555], ['cloud', 21, 921],
    ['cloud', 145, 933], ['cloud', 118, 968], ['cloud', 14, 1026], ['cloud', 152, 1035], ['cloud', 397, 1030], ['cloud', 28, 1104],
    ['planet', 50, 933, -25], ['planet', 260, 920], ['planet', 285, 1018], ['star', 102, 934], ['star', 18, 950], ['star', 192, 906],
    ['star', 354, 948], ['star', 284, 973], ['star', 121, 1033], ['star', 78, 1058], ['star', 15, 1076], ['star', 401, 1008],
    ['star', 270, 1132], ['donut', 307, 937, -8], ['donut', 237, 1034, 8], ['banana', 180, 957], ['banana', 365, 1058, -80],
    ['peanut', 217, 935], ['bolt', 62, 965], ['dart', 36, 980], ['pin', 120, 990], ['pin', 248, 1122], ['sparkle', 75, 987],
    ['sparkle', 190, 991], ['sparkle', 204, 1018], ['sparkle', 340, 920], ['sparkle', 138, 943], ['sparkle', 281, 1058],
    ['sparkle', 405, 1052], ['smiley', 161, 988], ['smiley', 352, 1095], ['paper', 237, 978, -12], ['pop', 315, 980, -4], ['poop', 62, 1027],
    ['gear', 98, 1018], ['rocket', 168, 1064], ['flame', 243, 1080], ['calc', 315, 1070], ['compass', 415, 990], ['camera', 388, 967],
    ['ball', 347, 1007], ['fan', 392, 1098], ['clock', 295, 1110], ['bottle', 320, 1130, 24], ['note', 265, 1108], ['note', 386, 993],
    ['heart', 366, 926], ['heart', 178, 1023], ['n42', 84, 1090, -12], ['calendar', 448, 1128, -8], ['speech', 524, 1114, -8],
    ['monkey', 513, 1156], ['astronaut', 595, 1164], ['smiley', 436, 1179], ['badge', 645, 1127], ['cloud', 580, 1105], ['sparkle', 605, 1108],
    ['sparkle', 565, 1130], ['sparkle', 478, 1162], ['sparkle', 484, 1115], ['donut', 470, 1198, -18], ['planet', 478, 922, 12],
    ['star', 603, 902], ['sparkle', 553, 914], ['gear', 653, 1018], ['avatar', 224, 1178], ['star', 245, 1150],
    ['cup', 396, 1160], ['letter', 290, 1172], ['astronaut', 40, 1164]
]

let drawing = ''
spots.forEach(([name, x, y, turn = 0]) => {
    drawing += `<g transform="translate(${x} ${y - TOP}) rotate(${turn})">${doodles[name]}</g>`
})

// small rings scattered between the doodles
let seed = 11
const random = () => (seed = seed * 16807 % 2147483647) / 2147483647
const small = ['star', 'sparkle', 'heart', 'cloud', 'pin', 'note', 'bolt', 'gear']
const rings = []
for (let i = 0; i < 6000 && rings.length < 460; i++) {
    const x = Math.round(random() * 658)
    const y = Math.round(random() * 1130) + TOP
    const clear = spots.every(([name, sx, sy]) => Math.hypot(sx - x, sy - y) > (small.includes(name) ? 13 : 24))
    if (clear && rings.every(([rx, ry]) => Math.hypot(rx - x, ry - y) > 11)) {
        rings.push([x, y])
        drawing += `<circle cx="${x}" cy="${y - TOP}" r="${2 + Math.round(random() * 2)}"/>`
    }
}
wallpaper.innerHTML = drawing
```
